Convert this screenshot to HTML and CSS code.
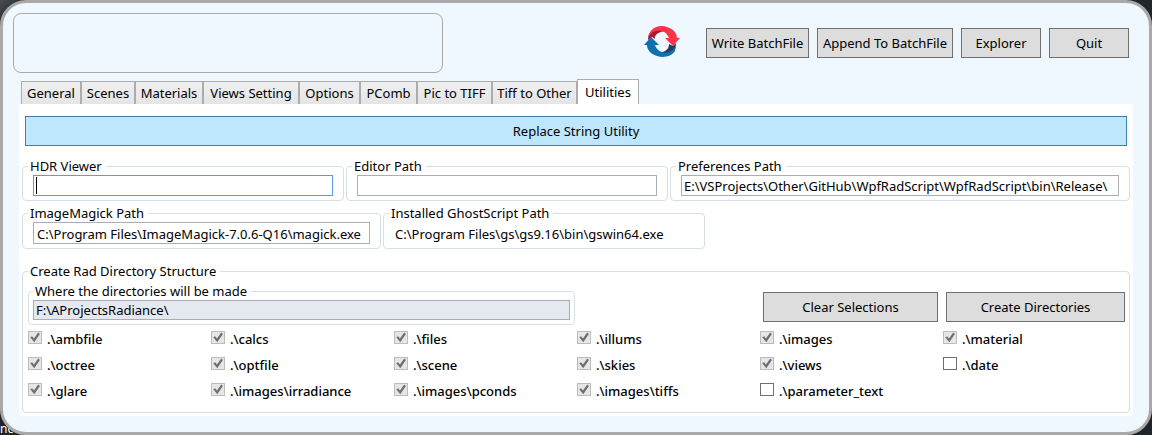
FILE: index.html
```html
<!DOCTYPE html>
<html lang="en">
<head>
<meta charset="utf-8">
<title>Utilities</title>
<link rel="stylesheet" href="styles.css">
</head>
<body>
<span class="desktop-label">nc</span>
<main class="window">
  <header class="header">
    <div class="message"></div>
    <svg class="logo" viewBox="0 0 36 32" aria-hidden="true">
      <path fill="#a81c38" d="M4 14C4 8 7 4 12 2L24 5C16 5 10 8 11 13L8 11Z"/>
      <path fill="#ff3347" d="M5 8C9 0 17-1 23 1C30 3 33 8 33 12H36L29 20L21 12H25C23 6 17 3 11 5C8 6 6 8 4 12Z"/>
      <path fill="#283b63" d="M32 17C32 23 29 28 24 30L13 26C20 27 25 24 25 18L29 20Z"/>
      <path fill="#0f70ad" d="M31 25C27 31 19 32 13 30C6 28 3 23 3 19H0L7 11L15 19H11C13 25 19 28 25 26C28 25 30 23 32 20Z"/>
    </svg>
    <div class="actions">
      <button class="btn write">Write BatchFile</button>
      <button class="btn append">Append To BatchFile</button>
      <button class="btn short">Explorer</button>
      <button class="btn short">Quit</button>
    </div>
  </header>
  <nav class="tabs" role="tablist">
    <button class="tab t-general" role="tab">General</button>
    <button class="tab t-scenes" role="tab">Scenes</button>
    <button class="tab t-materials" role="tab">Materials</button>
    <button class="tab t-views" role="tab">Views Setting</button>
    <button class="tab t-options" role="tab">Options</button>
    <button class="tab t-pcomb" role="tab">PComb</button>
    <button class="tab t-pic" role="tab">Pic to TIFF</button>
    <button class="tab t-tiff" role="tab">Tiff to Other</button>
    <button class="tab selected" role="tab" aria-selected="true">Utilities</button>
  </nav>
  <section class="page">
    <button class="btn replace">Replace String Utility</button>
    <div class="paths">
      <fieldset class="group">
        <legend><label for="hdr">HDR Viewer</label></legend>
        <div class="field"><input class="text active" id="hdr" type="text"><span class="caret"></span></div>
      </fieldset>
      <fieldset class="group">
        <legend><label for="editor">Editor Path</label></legend>
        <input class="text" id="editor" type="text">
      </fieldset>
      <fieldset class="group">
        <legend><label for="prefs">Preferences Path</label></legend>
        <input class="text" id="prefs" type="text" value="E:\VSProjects\Other\GitHub\WpfRadScript\WpfRadScript\bin\Release\">
      </fieldset>
    </div>
    <div class="paths tools">
      <fieldset class="group">
        <legend><label for="magick">ImageMagick Path</label></legend>
        <input class="text tall" id="magick" type="text" value="C:\Program Files\ImageMagick-7.0.6-Q16\magick.exe">
      </fieldset>
      <fieldset class="group">
        <legend><label for="gs">Installed GhostScript Path</label></legend>
        <input class="text tall plain" id="gs" type="text" readonly value="C:\Program Files\gs\gs9.16\bin\gswin64.exe">
      </fieldset>
    </div>
    <fieldset class="group structure">
      <legend>Create Rad Directory Structure</legend>
      <div class="target">
        <fieldset class="group root">
          <legend><label for="root">Where the directories will be made</label></legend>
          <input class="text muted" id="root" type="text" readonly value="F:\AProjectsRadiance\">
        </fieldset>
        <div class="target-actions">
          <button class="btn">Clear Selections</button>
          <button class="btn">Create Directories</button>
        </div>
      </div>
      <div class="checks">
        <label class="check"><input type="checkbox" checked disabled>.\ambfile</label>
        <label class="check"><input type="checkbox" checked disabled>.\calcs</label>
        <label class="check"><input type="checkbox" checked disabled>.\files</label>
        <label class="check"><input type="checkbox" checked disabled>.\illums</label>
        <label class="check"><input type="checkbox" checked disabled>.\images</label>
        <label class="check"><input type="checkbox" checked disabled>.\material</label>
        <label class="check"><input type="checkbox" checked disabled>.\octree</label>
        <label class="check"><input type="checkbox" checked disabled>.\optfile</label>
        <label class="check"><input type="checkbox" checked disabled>.\scene</label>
        <label class="check"><input type="checkbox" checked disabled>.\skies</label>
        <label class="check"><input type="checkbox" checked disabled>.\views</label>
        <label class="check"><input type="checkbox">.\date</label>
        <label class="check"><input type="checkbox" checked disabled>.\glare</label>
        <label class="check"><input type="checkbox" checked disabled>.\images\irradiance</label>
        <label class="check"><input type="checkbox" checked disabled>.\images\pconds</label>
        <label class="check"><input type="checkbox" checked disabled>.\images\tiffs</label>
        <label class="check"><input type="checkbox">.\parameter_text</label>
      </div>
    </fieldset>
  </section>
</main>
</body>
</html>
```
FILE: styles.css
```css
* { box-sizing: border-box; }
body {
  margin: 0;
  min-height: 100vh;
  background: linear-gradient(135deg, #4a4c50, #20252b 24px);
  color: #000;
  font: 13px/17px "Noto Sans", "Open Sans", sans-serif;
}
button, input { font: inherit; color: inherit; margin: 0; }
.desktop-label {
  position: absolute;
  left: 0;
  bottom: -2px;
  color: #fff;
  font-size: 12px;
}
.window {
  position: relative;
  min-height: 100vh;
  padding: 10px 16px 16px;
  border: 3px solid #a9a9a9;
  border-radius: 26px;
  background: #f0f8ff;
}
.header {
  display: flex;
  align-items: flex-start;
  padding-right: 4px;
  margin-left: -6px;
}
.message {
  width: 430px;
  height: 60px;
  border: 1px solid #a9a9a9;
  border-radius: 8px;
}
.logo {
  width: 36px;
  height: 32px;
  margin: 13px 0 0 auto;
}
.actions { display: flex; gap: 8px; margin: 15px 0 0 26px; }
.btn {
  height: 30px;
  padding: 1px 0 0;
  border: 1px solid #707070;
  border-radius: 0;
  background: #ddd;
  white-space: nowrap;
}
.write { width: 103px; }
.append { width: 136px; }
.short { width: 80px; }
.tabs { display: flex; align-items: flex-end; height: 31px; padding-left: 2px; }
.tab {
  height: 23px;
  padding: 0;
  border: 1px solid #acacac;
  border-bottom: 0;
  background: linear-gradient(#f0f0f0, #e5e5e5);
  white-space: nowrap;
}
.t-general { width: 60px; }
.t-scenes { width: 54px; }
.t-materials { width: 68px; }
.t-views { width: 96px; }
.t-options { width: 61px; }
.t-pcomb { width: 57px; }
.t-pic { width: 75px; }
.t-tiff { width: 85px; }
.selected { width: 62px; height: 25px; background: #fff; }
.page { padding: 12px 3px 3px; background: #fff; }
.replace {
  display: block;
  width: calc(100% - 6px);
  margin: 0 3px 12px;
  border-color: #3c7fb1;
  background: #bee6fd;
}
.group {
  min-width: 0;
  margin: 0;
  padding: 0 10px 4px;
  border: 1px solid #d5dfe5;
  border-radius: 4px;
}
.group legend { margin-left: -5px; padding: 0 4px 0 2px; }
.paths { display: grid; grid-template-columns: 322fr 322fr 460fr; gap: 2px; margin-bottom: 4px; }
.tools { grid-template-columns: 359fr 322fr 423fr; margin-bottom: 14px; }
.text {
  display: block;
  width: 100%;
  height: 21px;
  padding: 0 2px;
  border: 1px solid #abadb3;
  border-radius: 0;
  background: #fff;
  outline: 0;
}
.field { position: relative; }
.active { border-color: #569de5; }
.caret {
  position: absolute;
  left: 3px;
  top: 2px;
  width: 1px;
  height: 17px;
  background: #000;
}
.tall { height: 22px; padding: 2px 3px 0; }
.plain { padding-left: 0; border-color: transparent; }
.muted { height: 20px; background: #e3e8f1; }
.structure { padding: 0 4px 8px 5px; }
.structure > legend { margin-left: 0; }
.target { display: flex; justify-content: space-between; padding-top: 3px; }
.root { flex: 0 1 547px; padding: 0 4px 4px; }
.root legend { margin-left: 0; }
.target-actions {
  display: grid;
  grid-template-columns: 175px 179px;
  gap: 8px;
  padding-top: 9px;
}
.checks {
  display: grid;
  grid-template-columns: repeat(6, 1fr);
  margin-right: -1px;
  padding-top: 1px;
}
.check { display: flex; gap: 5px; line-height: 26px; font-weight: 500; }
.check input {
  appearance: none;
  flex: none;
  width: 14px;
  height: 13px;
  margin-top: 5px;
  border: 1px solid #707070;
  background: #fff;
}
.check input:checked { border-color: #bcbcbc; background: #e6e6e6; }
.check input:checked::before {
  content: "";
  display: block;
  width: 12px;
  height: 11px;
  background: #707070;
  clip-path: polygon(10% 48%, 26% 38%, 41% 60%, 77% 5%, 91% 18%, 44% 94%);
}
```
